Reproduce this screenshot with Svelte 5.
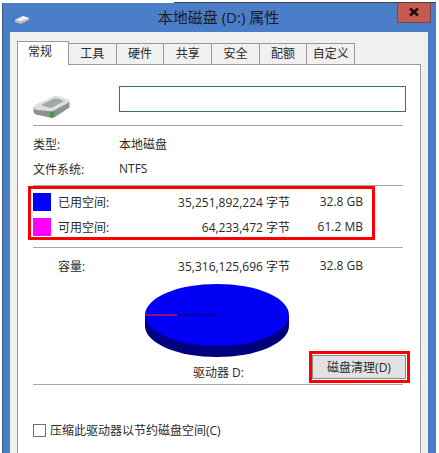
<script>
  const tabs = ['常规', '工具', '硬件', '共享', '安全', '配额', '自定义']
</script>

<div class="window">
  <div class="titlebar">
    <svg class="title-icon" width="16" height="10" viewBox="0 0 16 10">
      <path d="M1 5 L9 1 L15 3 L15 5 L7 9 L1 7 Z" fill="#b9bdbb" />
      <path d="M1 5 L9 1 L15 3 L7 6 Z" fill="#f2f3f2" />
    </svg>
    <span class="title">本地磁盘 (D:) 属性</span>
  </div>
  <button class="close">
    <svg width="12" height="10" viewBox="0 0 12 10">
      <path d="M2 1.5 L10 8.5 M10 1.5 L2 8.5" stroke="#1a1010" stroke-width="2.6" />
    </svg>
  </button>

  <div class="content">
    <div class="tabs">
      {#each tabs as tab, i}
        <div class="tab" class:active={i === 0}>{tab}</div>
      {/each}
    </div>

    <div class="panel">
      <div class="head">
        <svg class="drive" width="38" height="24" viewBox="0 0 38 24">
          <path d="M0.5 12 L0.5 16.5 Q1 19.5 5 20 L17 22.5 Q20 23 22 22 L36.5 12.5 L36.5 6 L21 13 L4 12 Z" fill="#8c9290" />
          <path d="M0.5 12 Q1 10 4 9 L19 2 Q22 0.5 26 1.5 L34 4 Q37.5 5 36.5 7 L22 15 Q19.5 16.5 16 16 L4 15 Q1 14.5 0.5 12 Z" fill="#dcdfdd" />
          <path d="M8 10 L20 4 Q23 3 26 4 L31 6 L20 12 Q18 13 15 12.5 Z" fill="#a3a8a6" />
          <rect x="17" y="17" width="4" height="5.5" fill="#3f9c3a" />
        </svg>
        <div class="name-input"></div>
      </div>
      <hr class="first" />

      <div class="info"><span class="label">类型:</span><span>本地磁盘</span></div>
      <div class="info"><span class="label">文件系统:</span><span class="latin">NTFS</span></div>
      <hr class="second" />

      <div class="usage">
        <div class="usage-row">
          <span class="swatch used"></span><span class="name">已用空间:</span>
          <span class="bytes">35,251,892,224 字节</span><span class="size">32.8 GB</span>
        </div>
        <div class="usage-row">
          <span class="swatch free"></span><span class="name">可用空间:</span>
          <span class="bytes">64,233,472 字节</span><span class="size">61.2 MB</span>
        </div>
        <div class="mark usage-mark"></div>
      </div>
      <hr class="third" />

      <div class="usage-row capacity">
        <span class="swatch blank"></span><span class="name">容量:</span>
        <span class="bytes">35,316,125,696 字节</span><span class="size">32.8 GB</span>
      </div>

      <div class="chart">
        <svg width="146" height="75" viewBox="0 0 146 75">
          <path d="M1 32 L1 43 A72 31 0 0 0 145 43 L145 32 Z" fill="#00007f" />
          <ellipse cx="73" cy="32" rx="72" ry="31" fill="#0000f4" />
          <path d="M1 32 L33 32" stroke="#8a0f8f" stroke-width="2" />
          <path d="M33 32 L73 32" stroke="#00006a" stroke-width="1" />
        </svg>
      </div>

      <div class="drive-row">
        <span class="drive-label">驱动器 D:</span>
        <div class="clean-wrap">
          <button class="clean">磁盘清理(D)</button>
          <div class="mark clean-mark"></div>
        </div>
      </div>
      <hr class="fourth" />

      <label class="compress">
        <span class="box"></span>
        <span>压缩此驱动器以节约磁盘空间(C)</span>
      </label>
    </div>
  </div>
</div>

<style>
  :global(body) {
    margin: 0;
    background: #fff;
    overflow: hidden;
  }

  .window {
    position: relative;
    box-sizing: border-box;
    width: 434px;
    height: 450px;
    margin: 3px 0 0 2px;
    padding: 0 8px 0 7px;
    background: #4a7ec8;
    border-left: 1px solid #3d5a80;
    font-family: "Open Sans", "Noto Sans CJK SC", sans-serif;
    font-size: 12px;
    color: #2a2a2a;
  }

  .window::before {
    content: '';
    position: absolute;
    top: -1px;
    left: 171px;
    right: 0;
    height: 1px;
    background: #444;
  }

  .titlebar {
    position: relative;
    height: 29px;
    text-align: center;
    line-height: 28px;
  }

  .title {
    font-size: 15px;
    color: #1c1c1c;
    margin-right: 1px;
  }

  .title-icon {
    position: absolute;
    left: 4px;
    top: 12px;
  }

  .close {
    position: absolute;
    top: 0;
    right: 5px;
    width: 34px;
    height: 20px;
    padding: 0;
    background: #c75a50;
    border: 1px solid #6f4a4a;
    border-top: none;
  }

  .content {
    box-sizing: border-box;
    height: 421px;
    padding: 9px 7px 0 7px;
    background: #f0f0f0;
  }

  .tabs {
    display: flex;
    align-items: flex-end;
    height: 23px;
  }

  .tab {
    box-sizing: border-box;
    width: 47.7px;
    height: 21px;
    line-height: 20px;
    text-align: center;
    background: #f0f0f0;
    border: 1px solid #999;
    border-left: none;
    border-bottom: none;
  }

  .tab.active {
    position: relative;
    z-index: 1;
    width: 52px;
    height: 24px;
    margin-bottom: -1px;
    line-height: 20px;
    background: #fff;
    border-left: 1px solid #999;
    padding-right: 6px;
  }

  .panel {
    box-sizing: border-box;
    height: 389px;
    padding: 0 17px 0 15px;
    background: #fff;
    border: 1px solid #999;
    border-bottom: none;
  }

  .head {
    display: flex;
    align-items: flex-start;
    height: 60px;
    padding-top: 21px;
    box-sizing: border-box;
  }

  .drive {
    margin-top: 9px;
    flex: none;
  }

  .name-input {
    box-sizing: border-box;
    flex: none;
    width: 287px;
    height: 26px;
    margin-left: 48px;
    border: 1px solid #3f6a7a;
  }

  hr {
    margin: 0;
    border: none;
    height: 1px;
    background: #a8a8a8;
    width: 370px;
  }

  .info {
    display: flex;
    align-items: center;
    height: 25px;
  }

  .first { margin-bottom: 5px; }
  .second { margin-top: 4px; margin-bottom: 3px; }

  .label {
    width: 86px;
  }

  .usage {
    position: relative;
  }

  .usage-row {
    display: flex;
    align-items: center;
    height: 25px;
  }

  .swatch {
    width: 18px;
    height: 18px;
    flex: none;
  }

  .used { background: #0000ff; }
  .free { background: #ff00ff; }
  .blank { background: transparent; }

  .name {
    width: 95px;
    margin-left: 7px;
  }

  .bytes {
    width: 137px;
    text-align: right;
  }

  .size {
    width: 73px;
    text-align: right;
  }

  .mark {
    position: absolute;
    box-sizing: border-box;
    border: 3px solid #f00;
  }

  .usage-mark {
    left: -5px;
    top: -3px;
    width: 347px;
    height: 54px;
  }

  .third { margin-top: 8px; margin-bottom: 5px; }

  .chart {
    display: flex;
    justify-content: center;
    width: 370px;
    height: 70px;
    margin-top: 5px;
  }

  .chart svg {
    margin-right: 3px;
    display: block;
  }

  .drive-row {
    display: flex;
    align-items: flex-end;
    height: 28px;
  }

  .drive-label {
    flex: none;
    width: 279px;
    padding-left: 160px;
    box-sizing: border-box;
    white-space: nowrap;
  }

  .clean-wrap {
    position: relative;
    flex: none;
    margin-bottom: 2px;
  }

  .clean {
    display: block;
    box-sizing: border-box;
    width: 94px;
    height: 24px;
    padding: 0;
    background: #e1e1e1;
    border: 1px solid #8a8a8a;
    font: inherit;
    color: #2a2a2a;
  }

  .clean-mark {
    left: -3px;
    top: -4px;
    width: 101px;
    height: 32px;
  }

  .fourth { margin-top: 3px; }

  .compress {
    display: flex;
    align-items: center;
    gap: 4px;
    margin-top: 37px;
    height: 16px;
  }

  .box {
    box-sizing: border-box;
    width: 13px;
    height: 13px;
    border: 1px solid #707070;
    background: #fff;
    flex: none;
  }
</style>
